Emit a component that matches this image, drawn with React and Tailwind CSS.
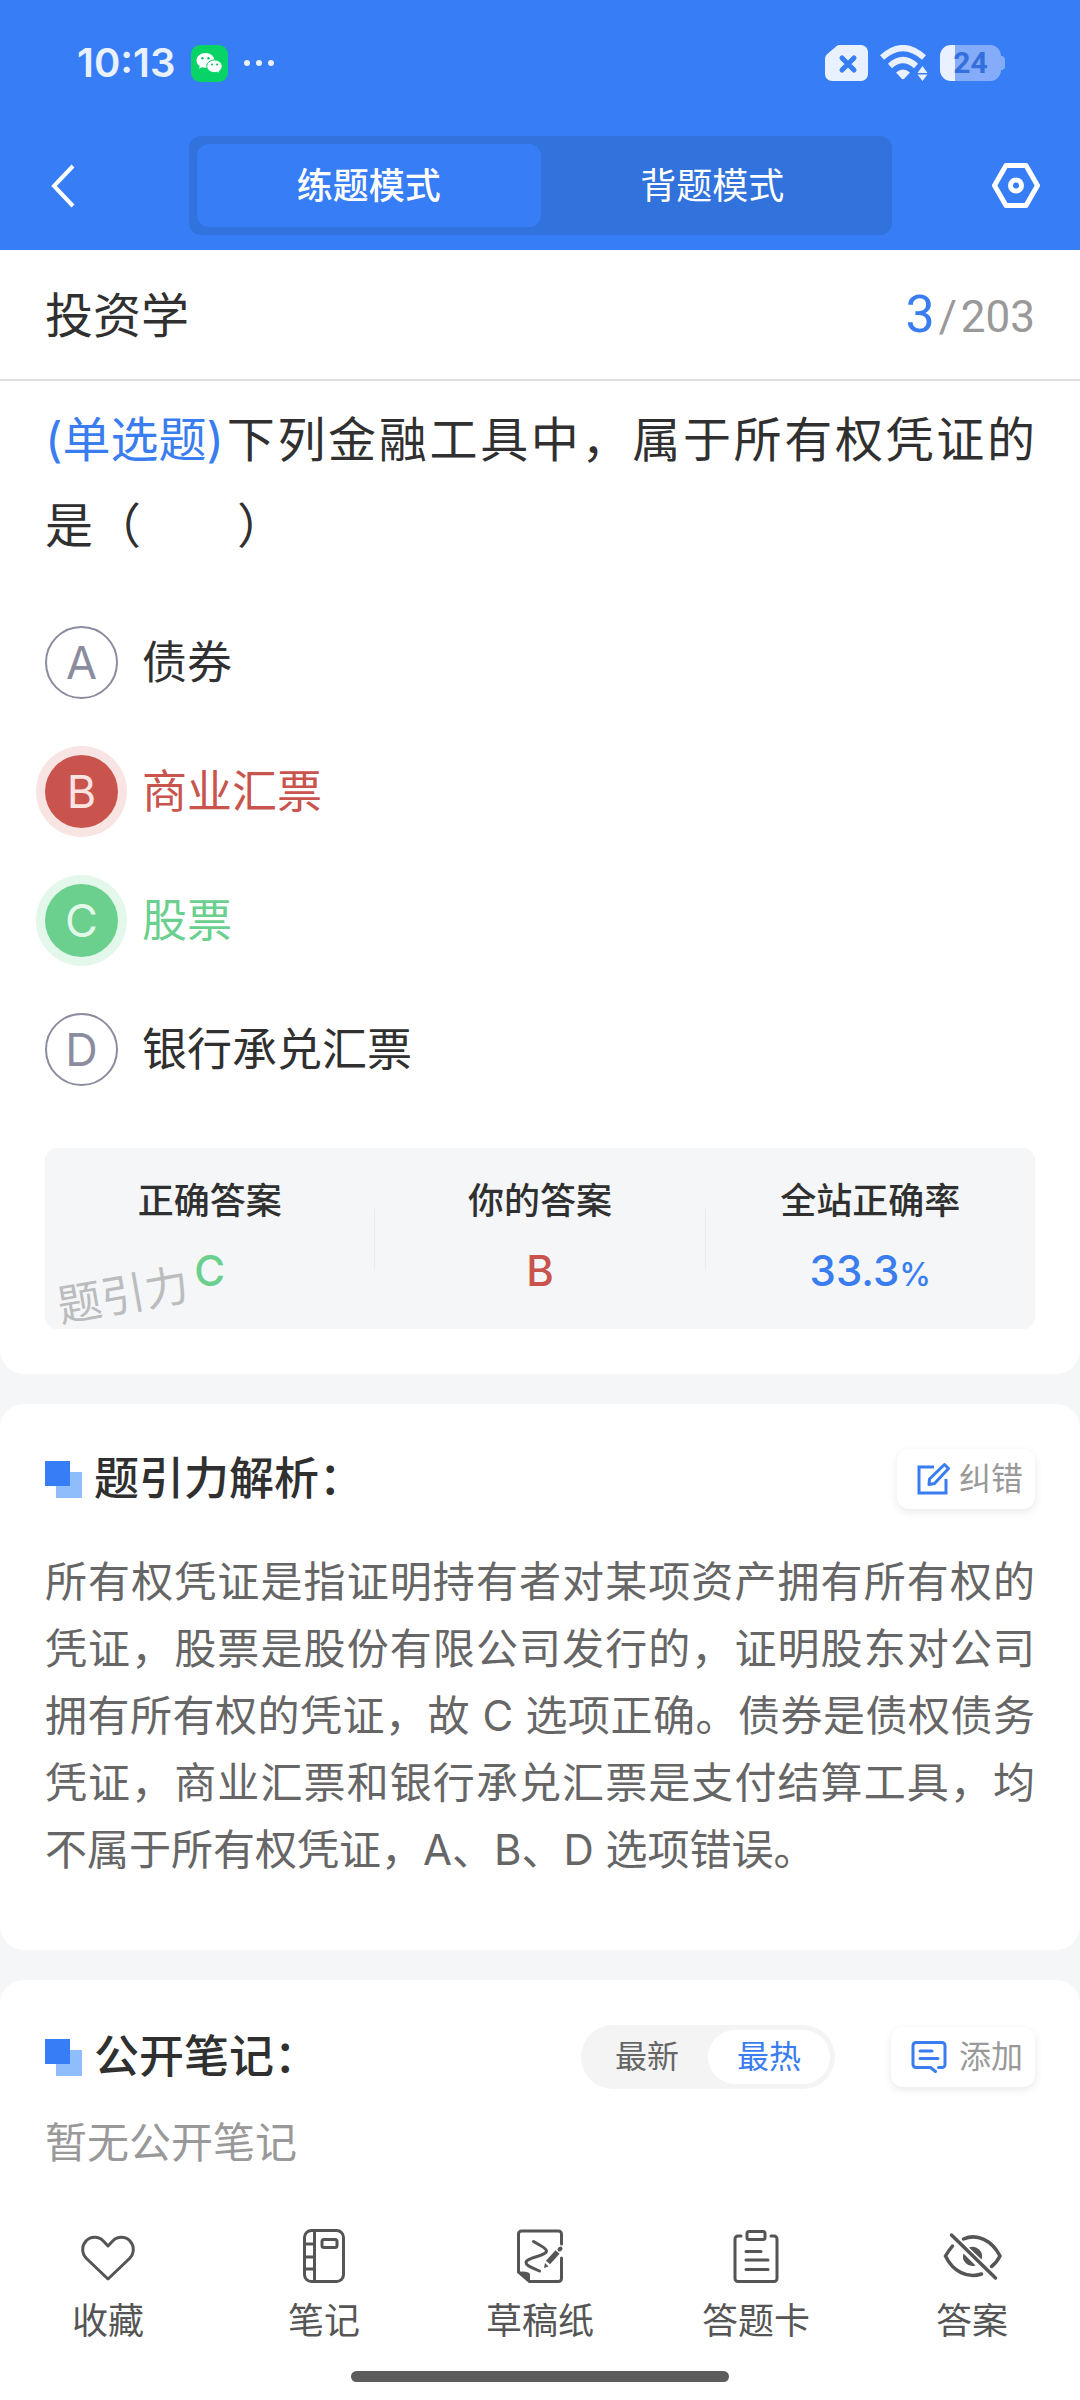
import { useState } from "react";
import clsx from "clsx";

const options = [
    { key: "A", text: "债券", state: "normal" },
    { key: "B", text: "商业汇票", state: "wrong" },
    { key: "C", text: "股票", state: "right" },
    { key: "D", text: "银行承兑汇票", state: "normal" },
];

const circleStyles = {
    normal: "border-2 border-[#8b8d9f] text-[#8b8d9f]",
    wrong: "bg-[#c9544e] text-[#fbe3e1] ring-9 ring-[#f7e4e3]",
    right: "bg-[#6bcf8e] text-[#e2f9ea] ring-9 ring-[#e3f7ea]",
};

const textStyles = {
    normal: "text-[#303030]",
    wrong: "text-[#c9544e]",
    right: "text-[#6bcf8e]",
};

function WechatIcon() {
    return (
        <svg className="size-[37px]" viewBox="0 0 37 37" aria-hidden="true">
            <rect width="37" height="37" rx="9" fill="#07d366" />
            <path d="M14.500 8C9.500 8 5.500 11.300 5.500 15.400c0 2.300 1.300 4.300 3.300 5.700l-.8 2.700 3.100-1.600c1.100.3 2.200.5 3.400.5 5 0 9-3.300 9-7.300S19.500 8 14.500 8z" fill="#fff" />
            <path d="M23.500 15c-4.300 0-7.700 2.800-7.700 6.300s3.400 6.300 7.700 6.300c1 0 1.900-.1 2.700-.4l2.600 1.400-.6-2.300c1.800-1.200 3-3 3-5 0-3.500-3.400-6.300-7.700-6.300z" fill="#fff" stroke="#07d366" strokeWidth="1" />
            <g fill="#07c05a">
                <circle cx="11.500" cy="13.300" r="1.200" />
                <circle cx="17.500" cy="13.300" r="1.200" />
                <circle cx="21" cy="19.500" r="1" />
                <circle cx="26" cy="19.500" r="1" />
            </g>
        </svg>
    );
}

function SimIcon() {
    return (
        <svg className="h-[36px] w-[43px]" viewBox="0 0 43 36" aria-hidden="true">
            <path d="M15 0h21a7 7 0 0 1 7 7v22a7 7 0 0 1-7 7H7a7 7 0 0 1-7-7V14c0-2 .7-3.500 2-4.800L10.500 2C12 .6 13 0 15 0z" fill="#e9f0fe" />
            <path d="M17 13l12 12M29 13L17 25" stroke="#377df6" strokeWidth="5" strokeLinecap="round" />
        </svg>
    );
}

function WifiIcon() {
    return (
        <svg className="h-[36px] w-[48px]" viewBox="0 0 48 36" aria-hidden="true">
            <g fill="none" stroke="#e9f0fe" strokeWidth="6">
                <path d="M2 12.500Q23-6.500 44 12.500" />
                <path d="M10 21Q23 9 36 21" />
            </g>
            <path d="M16 27.500q7-6 14 0l-5.500 6q-1.500 1.500-3 0z" fill="#e9f0fe" />
            <path d="M42.500 21l5 7h-10zM42.500 36l5-6.500h-10z" fill="#e9f0fe" />
        </svg>
    );
}

function Battery({ level }) {
    return (
        <div className="flex items-center">
            <div className="flex h-[36px] w-[61px] items-center justify-center rounded-[11px] bg-[linear-gradient(to_right,#e9f0fe_25%,#84acf9_25%)] font-['Roboto',sans-serif] text-[30px] leading-none font-bold text-[#3470dc]">
                {level}
            </div>
            <div className="h-[14px] w-[4px] rounded-r-full bg-[#84acf9]" />
        </div>
    );
}

function EditIcon() {
    return (
        <svg className="size-[34px]" viewBox="0 0 34 34" fill="none" stroke="#3a7df0" strokeWidth="3" aria-hidden="true">
            <path d="M17 5H2v26h27V17" />
            <path d="M27.500 2.500l4 4L17.500 21.500l-5.500 1 .5-5.500z" strokeLinejoin="round" />
        </svg>
    );
}

function CommentIcon() {
    return (
        <svg className="mr-1 h-[32px] w-[36px]" viewBox="0 0 36 32" fill="none" stroke="#3a7df0" strokeWidth="3" strokeLinecap="round" strokeLinejoin="round" aria-hidden="true">
            <path d="M27.500 26.500H31a3 3 0 0 0 3-3V4.500a3 3 0 0 0-3-3H5a3 3 0 0 0-3 3v19a3 3 0 0 0 3 3h14.500l5 4" />
            <path d="M9 10h12M9 17.500h18" />
        </svg>
    );
}

function HeartIcon() {
    return (
        <svg className="size-[54px]" viewBox="0 0 54 54" fill="none" stroke="#555" strokeWidth="3" strokeLinejoin="round" aria-hidden="true">
            <path d="M27 50L5.500 29.500c-5-5-5-12.500-.5-17.500 4.700-5 12.500-5 17.300 0L27 17l4.700-5c4.800-5 12.600-5 17.300 0 4.500 5 4.500 12.500-.5 17.500z" />
        </svg>
    );
}

function NotebookIcon() {
    return (
        <svg className="size-[54px]" viewBox="0 0 54 54" fill="none" stroke="#555" strokeWidth="3" aria-hidden="true">
            <rect x="7.500" y="1.500" width="39" height="51" rx="7" />
            <path d="M17.500 2v51M7 15h10M7 28h10M7 40h10" />
            <rect x="25" y="10.500" width="15" height="8" rx="2" />
        </svg>
    );
}

function ScratchIcon() {
    return (
        <svg className="size-[54px]" viewBox="0 0 54 54" fill="none" stroke="#555" strokeWidth="3" strokeLinecap="round" aria-hidden="true">
            <path d="M48.500 15V5a3 3 0 0 0-3-3H8.500a3 3 0 0 0-3 3v38l11 9.500h29a3 3 0 0 0 3-3V29" />
            <path d="M5 43c6-1.500 11 0 12 2v8z" fill="#555" stroke="none" />
            <path d="M20.500 12.500c7 4.500 13 6.500 13 9.500 0 5-20.500 6.500-20.500 11.500 0 3.500 6.500 5 13.500 8.500" />
            <path d="M35 33.500L44.500 23" strokeWidth="5.500" strokeLinecap="butt" />
            <path d="M46.500 20.500l1-1" strokeWidth="4" />
            <path d="M32 34l3.500 3.500-4.500 1.500z" fill="#555" stroke="none" />
        </svg>
    );
}

function ClipboardIcon() {
    return (
        <svg className="size-[54px]" viewBox="0 0 54 54" fill="none" stroke="#555" strokeWidth="3" strokeLinecap="round" strokeLinejoin="round" aria-hidden="true">
            <path d="M12 7H9a3 3 0 0 0-3 3v39.500a3 3 0 0 0 3 3h36a3 3 0 0 0 3-3V10a3 3 0 0 0-3-3h-3" />
            <rect x="18" y="2.500" width="18" height="8" rx="2" />
            <path d="M17 22.500h15M17 31h22M17 40.500h22" />
        </svg>
    );
}

function EyeOffIcon() {
    return (
        <svg className="h-[54px] w-[60px]" viewBox="0 0 60 54" fill="none" stroke="#555" strokeWidth="3.500" strokeLinecap="round" aria-hidden="true">
            <path d="M9.500 6l44 43" />
            <path d="M21.500 10C35 4 50 11.500 58 27c-2 4-4.500 7.500-8.500 10.500" />
            <path d="M10.500 17C8 20 5.500 23.500 3.500 27c7.500 16 22 22.500 36 18" />
            <path d="M27 18.500a9.500 9.500 0 0 1 12.500 12z" fill="#555" stroke="none" />
            <path d="M21.500 24.500a9.500 9.500 0 0 0 12 12z" fill="#555" stroke="none" />
        </svg>
    );
}

const tools = [
    { label: "收藏", icon: HeartIcon },
    { label: "笔记", icon: NotebookIcon },
    { label: "草稿纸", icon: ScratchIcon },
    { label: "答题卡", icon: ClipboardIcon },
    { label: "答案", icon: EyeOffIcon },
];

function SectionTitle({ children }) {
    return (
        <h2 className="flex items-center gap-3 text-[45px] leading-[60px] font-medium text-[#303030]">
            <svg className="size-[37px]" viewBox="0 0 37 37" aria-hidden="true">
                <rect x="11" y="11" width="26" height="26" fill="#8fbdfb" />
                <rect width="25" height="25" fill="#377df6" />
            </svg>
            {children}
        </h2>
    );
}

function ActionButton({ icon, children }) {
    return (
        <button className="flex h-[60px] items-center gap-2 rounded-xl bg-white pr-3 pl-5 text-[32px] leading-[48px] text-[#999] shadow-[0_3px_9px_rgba(0,0,0,0.09)]">
            {icon}
            {children}
        </button>
    );
}

function Stat({ label, className, children }) {
    return (
        <div className="flex-1 text-center">
            <dt className="text-[36px] leading-[48px] font-medium text-[#303030]">{label}</dt>
            <dd className={clsx("mt-4 text-[42px] leading-[60px] font-medium", className)}>{children}</dd>
        </div>
    );
}

export default function App() {
    const [mode, setMode] = useState("practice");
    const [sort, setSort] = useState("hot");

    return (
        <div className="flex min-h-screen flex-col bg-[#f4f6f8] font-['Inter','Noto_Sans_CJK_SC',sans-serif] text-[#303030]">
            <header className="bg-[#377df6] pb-[15px] text-white">
                <div className="flex h-[126px] items-center justify-between pr-[75px] pl-[77px]">
                    <div className="flex items-center">
                        <span className="text-[40px] leading-[60px] font-semibold text-[#e9f0fe]">10:13</span>
                        <span className="ml-4 flex items-center gap-4">
                            <WechatIcon />
                            <span className="flex gap-[6px]">
                                <i className="size-[6px] rounded-full bg-[#e9f0fe]" />
                                <i className="size-[6px] rounded-full bg-[#e9f0fe]" />
                                <i className="size-[6px] rounded-full bg-[#e9f0fe]" />
                            </span>
                        </span>
                    </div>
                    <div className="flex items-center gap-3">
                        <SimIcon />
                        <WifiIcon />
                        <Battery level={24} />
                    </div>
                </div>

                <div className="mt-[10px] flex items-center justify-between pr-[40px] pl-[51px]">
                    <button aria-label="返回" className="w-[38px]">
                        <svg className="h-[44px] w-[24px]" viewBox="0 0 24 44" fill="none" stroke="#fff" strokeWidth="4" aria-hidden="true">
                            <path d="M22 2L3 22l19 20" />
                        </svg>
                    </button>
                    <div className="flex h-[99px] w-[703px] rounded-xl bg-[#3172dc] p-2">
                        <button
                            onClick={() => setMode("practice")}
                            className={clsx("flex-1 rounded-xl text-[36px] leading-[48px]", mode === "practice" && "bg-[#377df6] font-medium")}
                        >
                            练题模式
                        </button>
                        <button
                            onClick={() => setMode("recite")}
                            className={clsx("flex-1 rounded-xl text-[36px] leading-[48px]", mode === "recite" && "bg-[#377df6] font-medium")}
                        >
                            背题模式
                        </button>
                    </div>
                    <button aria-label="设置">
                        <svg className="size-[48px]" viewBox="0 0 48 48" fill="none" stroke="#fff" strokeWidth="5" strokeLinejoin="round" aria-hidden="true">
                            <path d="M14 3.500h20L45.500 23.500 34 43.500H14L2.500 23.500z" />
                            <circle cx="24" cy="23.500" r="5.500" />
                        </svg>
                    </button>
                </div>
            </header>

            <main className="flex flex-1 flex-col gap-[30px]">
                <section className="rounded-b-3xl bg-white pb-[45px]">
                    <div className="flex h-[131px] items-center justify-between border-b-2 border-[#dcdee0] px-[45px] pt-[2px]">
                        <h1 className="text-[48px] leading-[60px]">投资学</h1>
                        <p className="flex items-baseline font-['Roboto',sans-serif] text-[44px] leading-[60px] text-[#999]">
                            <span className="mr-1 text-[52px] text-[#3a7df0]">3</span>
                            <span className="mr-1">/</span>
                            203
                        </p>
                    </div>

                    <div className="px-[45px]">
                        <p className="mt-4 text-justify text-[48px] leading-[86px]">
                            <span className="inline-block text-[#3a7df0]">(单选题)</span>
                            下列金融工具中，属于所有权凭证的是（　　）
                        </p>

                        <ul className="mt-[57px] flex flex-col gap-[56px]">
                            {options.map((item) => (
                                <li key={item.key}>
                                    <button className="flex items-center gap-6 text-left text-[45px] leading-[60px]">
                                        <span className={clsx("flex size-[73px] items-center justify-center rounded-full", circleStyles[item.state])}>
                                            {item.key}
                                        </span>
                                        <span className={textStyles[item.state]}>{item.text}</span>
                                    </button>
                                </li>
                            ))}
                        </ul>

                        <div className="relative mt-[62px] rounded-xl bg-[#f4f6f8] pt-[29px] pb-[28px]">
                            <dl className="flex items-center">
                                <Stat label="正确答案" className="text-[#6bcf8e]">C</Stat>
                                <div className="h-[60px] w-px bg-[#e8eaed]" />
                                <Stat label="你的答案" className="text-[#c9544e]">B</Stat>
                                <div className="h-[60px] w-px bg-[#e8eaed]" />
                                <Stat label="全站正确率" className="text-[#3a7df0]">
                                    33.3<span className="text-[32px] leading-none">%</span>
                                </Stat>
                            </dl>
                            <span className="absolute bottom-1 left-3 -rotate-10 text-[44px] leading-[60px] text-[#bbbcbe]">题引力</span>
                        </div>
                    </div>
                </section>

                <section className="rounded-3xl bg-white px-[45px] pt-[45px] pb-[67px]">
                    <div className="flex items-center justify-between">
                        <SectionTitle>题引力解析：</SectionTitle>
                        <ActionButton icon={<EditIcon />}>纠错</ActionButton>
                    </div>
                    <p className="mt-[39px] text-justify text-[42px] leading-[67px] text-[#666]">
                        所有权凭证是指证明持有者对某项资产拥有所有权的凭证，股票是股份有限公司发行的，证明股东对公司拥有所有权的凭证，故 C 选项正确。债券是债权债务凭证，商业汇票和银行承兑汇票是支付结算工具，均不属于所有权凭证，A、B、D 选项错误。
                    </p>
                </section>

                <section className="flex-1 rounded-t-3xl bg-white px-[45px] pt-[45px]">
                    <div className="flex items-center">
                        <SectionTitle>公开笔记：</SectionTitle>
                        <div className="ml-auto flex h-[64px] w-[254px] rounded-full bg-[#f4f4f4] p-[5px] text-[32px] leading-[48px]">
                            <button
                                onClick={() => setSort("new")}
                                className={clsx("flex-1 rounded-full", sort === "new" ? "bg-white text-[#3a7df0]" : "text-[#666]")}
                            >
                                最新
                            </button>
                            <button
                                onClick={() => setSort("hot")}
                                className={clsx("flex-1 rounded-full", sort === "hot" ? "bg-white text-[#3a7df0]" : "text-[#666]")}
                            >
                                最热
                            </button>
                        </div>
                        <div className="ml-14">
                            <ActionButton icon={<CommentIcon />}>添加</ActionButton>
                        </div>
                    </div>
                    <p className="mt-6 text-[42px] leading-[60px] text-[#999]">暂无公开笔记</p>
                </section>
            </main>

            <footer className="sticky bottom-0 bg-white pt-[27px] pb-[18px]">
                <nav className="grid grid-cols-5">
                    {tools.map(({ label, icon: Icon }) => (
                        <button key={label} className="flex flex-col items-center gap-[14px] text-[36px] leading-[48px] text-[#555]">
                            <Icon />
                            {label}
                        </button>
                    ))}
                </nav>
                <div className="mx-auto mt-[26px] h-[11px] w-[35%] rounded-full bg-[#5c5c5c]" />
            </footer>
        </div>
    );
}
